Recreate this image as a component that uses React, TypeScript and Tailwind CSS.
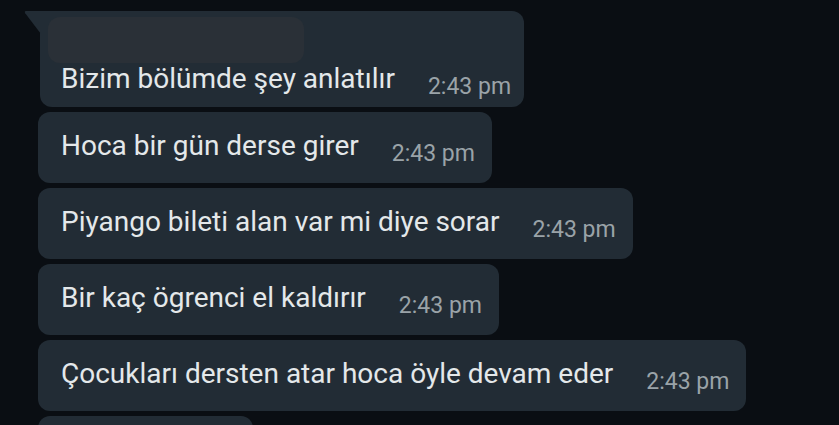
import React from "react";

const msgs = [
  { text: "Hoca bir gün derse girer" },
  { text: "Piyango bileti alan var mi diye sorar" },
  { text: "Bir kaç ögrenci el kaldırır" },
  { text: "Çocukları dersten atar hoca öyle devam eder" },
];

function Time() {
  return (
    <span className="ml-[33px] mt-[28px] text-[23px] leading-[28px] text-[#9aa3a8] whitespace-nowrap">
      2:43 pm
    </span>
  );
}

export default function App() {
  return (
    <div
      className="w-[839px] h-[425px] overflow-hidden bg-[#0a0e13] pt-[11px] pl-[38px] flex flex-col items-start gap-[5px]"
      style={{ fontFamily: "Roboto, 'Noto Sans', sans-serif" }}
    >
      <div className="relative ml-[2px] shrink-0">
        <svg
          className="absolute left-[-16px] top-0"
          width="17"
          height="24"
          viewBox="0 0 17 24"
        >
          <path d="M2 0 H17 V23 L1.2 2.2 Q0 0 2 0 Z" fill="#222c35" />
        </svg>
        <div className="bg-[#222c35] rounded-[12px] rounded-tl-none h-[96px] pl-[8px] pr-[13px] pt-[6px] flex flex-col">
          <div className="w-[256px] h-[46px] rounded-[12px] bg-[#2a3037]" />
          <div className="flex items-start pl-[13px] -mt-[18px]">
            <span className="mt-[18px] text-[28px] leading-[32px] text-[#e4e8ea] whitespace-nowrap">
              Bizim bölümde şey anlatılır
            </span>
            <Time />
          </div>
        </div>
      </div>
      {msgs.map((m, i) => (
        <div
          key={i}
          className="shrink-0 bg-[#222c35] rounded-[12px] h-[71px] pl-[23px] pr-[17px] flex items-start"
        >
          <span className="mt-[18px] text-[28px] leading-[32px] text-[#e4e8ea] whitespace-nowrap">
            {m.text}
          </span>
          <Time />
        </div>
      ))}
      <div className="shrink-0 bg-[#222c35] rounded-[12px] h-[71px] w-[215px]" />
    </div>
  );
}
